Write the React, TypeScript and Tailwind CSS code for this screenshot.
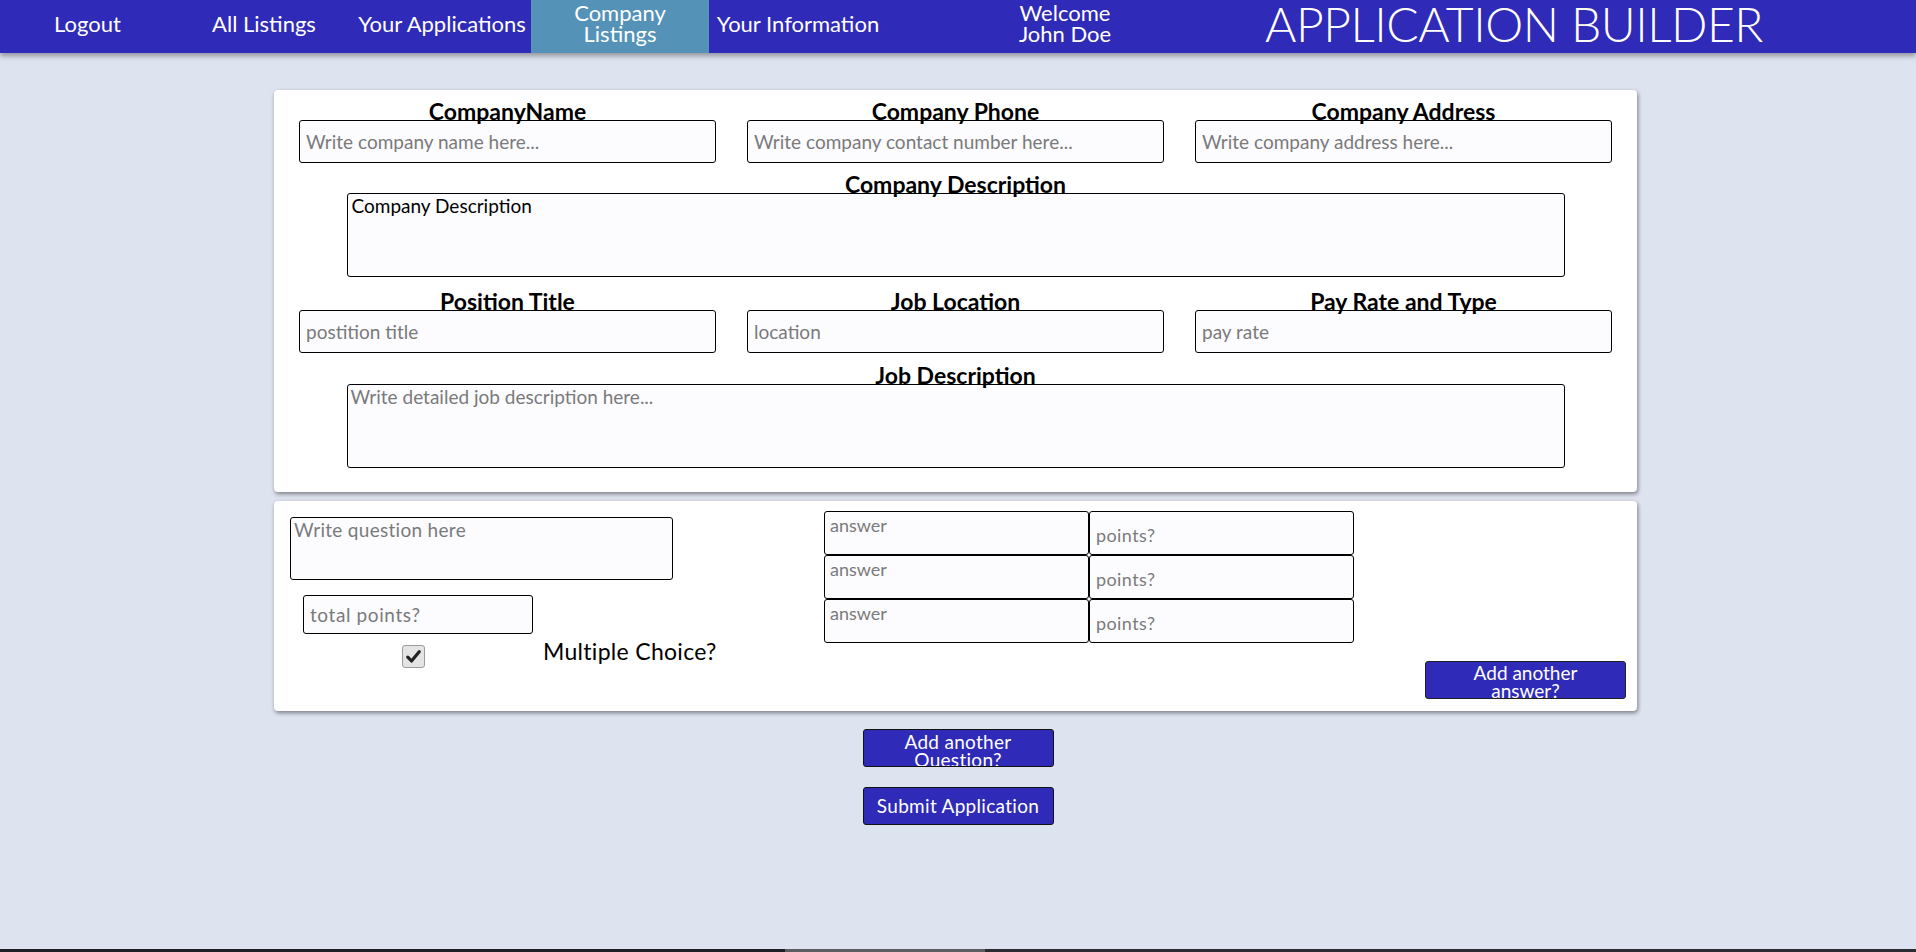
import React from "react";

const font = { fontFamily: "Lato, 'Noto Sans', sans-serif" };

function Label({ children }: { children: React.ReactNode }) {
  return (
    <div className="h-[18px] leading-[18px] text-center text-[23px] font-bold text-black whitespace-nowrap">
      {children}
    </div>
  );
}

function Field({ placeholder }: { placeholder: string }) {
  return (
    <input
      placeholder={placeholder}
      className="block w-full h-[43px] px-[6px] text-[19px] text-black bg-[#fcfcff] border border-black rounded-[3px] placeholder:text-[#7a7a7a] outline-none"
    />
  );
}

export default function App() {
  return (
    <div style={font} className="w-full h-screen bg-[#dee3f0] flex flex-col overflow-hidden">
      {/* Nav */}
      <nav className="h-[53px] shrink-0 bg-[#2f2ab7] flex items-stretch text-white shadow-[0_3px_5px_rgba(0,0,0,0.35)] relative z-10">
        <div className="w-[175px] pb-[7px] flex items-center justify-center text-[22px]">Logout</div>
        <div className="w-[178px] pb-[7px] flex items-center justify-center text-[22px] whitespace-nowrap">All Listings</div>
        <div className="w-[178px] pb-[7px] flex items-center justify-center text-[22px] whitespace-nowrap">Your Applications</div>
        <div className="w-[178px] pb-[7px] flex items-center justify-center text-center text-[22px] leading-[21px] bg-[#5592b8]">
          Company
          <br />
          Listings
        </div>
        <div className="w-[178px] pb-[7px] flex items-center justify-center text-[22px] whitespace-nowrap">Your Information</div>
        <div className="w-[356px] pb-[7px] flex items-center justify-center text-center text-[22px] leading-[21px]">
          Welcome
          <br />
          John Doe
        </div>
        <div className="w-[542px] pb-[5px] flex items-center justify-center text-[48px] leading-[48px] font-light tracking-[-0.5px] whitespace-nowrap">
          APPLICATION BUILDER
        </div>
      </nav>

      {/* Card 1 */}
      <div className="ml-[274px] mt-[37px] w-[1363px] bg-white rounded-[4px] shadow-[1px_2px_4px_rgba(0,0,0,0.45)] px-[25px] pt-[12px] pb-[24px]">
        <div className="grid grid-cols-3 gap-x-[31px]">
          <div>
            <Label>CompanyName</Label>
            <Field placeholder="Write company name here..." />
          </div>
          <div>
            <Label>Company Phone</Label>
            <Field placeholder="Write company contact number here..." />
          </div>
          <div>
            <Label>Company Address</Label>
            <Field placeholder="Write company address here..." />
          </div>
        </div>
        <div className="mt-[12px] w-[1218px] mx-auto">
          <Label>Company Description</Label>
          <textarea
            defaultValue="Company Description"
            className="block w-full h-[84px] px-[4px] py-[1px] text-[19px] leading-[22px] text-black bg-[#fcfcff] border border-black rounded-[3px] resize-none outline-none"
          />
        </div>
        <div className="mt-[15px] grid grid-cols-3 gap-x-[31px]">
          <div>
            <Label>Position Title</Label>
            <Field placeholder="postition title" />
          </div>
          <div>
            <Label>Job Location</Label>
            <Field placeholder="location" />
          </div>
          <div>
            <Label>Pay Rate and Type</Label>
            <Field placeholder="pay rate" />
          </div>
        </div>
        <div className="mt-[13px] w-[1218px] mx-auto">
          <Label>Job Description</Label>
          <textarea
            placeholder="Write detailed job description here..."
            className="block w-full h-[84px] px-[3px] py-[1px] text-[19px] leading-[22px] text-black bg-[#fcfcff] border border-black rounded-[3px] resize-none outline-none placeholder:text-[#7a7a7a]"
          />
        </div>
      </div>

      {/* Card 2 */}
      <div className="ml-[274px] mt-[9px] w-[1363px] h-[210px] bg-white rounded-[4px] shadow-[1px_2px_4px_rgba(0,0,0,0.45)] flex items-start">
        <div className="w-[456px] pl-[16px] pt-[16px] shrink-0">
          <textarea
            placeholder="Write question here"
            className="block w-[383px] h-[63px] px-[3px] py-[1px] text-[19px] leading-[22px] tracking-[0.3px] bg-[#fcfcff] border border-black rounded-[3px] resize-none outline-none placeholder:text-[#7a7a7a]"
          />
          <input
            placeholder="total points?"
            className="block ml-[13px] mt-[15px] w-[230px] h-[39px] px-[6px] text-[19px] tracking-[0.6px] bg-[#fcfcff] border border-black rounded-[3px] outline-none placeholder:text-[#7a7a7a]"
          />
          <div className="mt-[5px] flex items-start">
            <div className="ml-[112px] mt-[6px] w-[23px] h-[23px] rounded-[3px] bg-[#e4e4e4] border border-[#9c9c9c] flex items-center justify-center">
              <svg width="15" height="13" viewBox="0 0 15 13">
                <path d="M1.8 7.2 L5.5 11 L13.2 1.8" fill="none" stroke="#222" strokeWidth="3.2" strokeLinecap="round" strokeLinejoin="round" />
              </svg>
            </div>
            <div className="ml-[118px] text-[23px] leading-[24px] tracking-[0.3px] text-black whitespace-nowrap">Multiple Choice?</div>
          </div>
        </div>

        <div className="mt-[10px] ml-[94px] grid grid-cols-[265px_265px]">
          {[0, 1, 2].map((i) => (
            <React.Fragment key={i}>
              <textarea
                placeholder="answer"
                className="block w-[265px] h-[44px] px-[5px] py-[3px] text-[18px] leading-[20px] bg-[#fcfcff] border border-black rounded-[3px] resize-none outline-none placeholder:text-[#7a7a7a]"
              />
              <input
                placeholder="points?"
                className="block w-[265px] h-[44px] px-[6px] pt-[4px] text-[18px] tracking-[0.4px] bg-[#fcfcff] border border-black rounded-[3px] outline-none placeholder:text-[#7a7a7a]"
              />
            </React.Fragment>
          ))}
        </div>

        <button className="self-end ml-auto mr-[11px] mb-[12px] w-[201px] h-[38px] overflow-hidden bg-[#2f2ab7] border border-[#222] rounded-[3px] text-white text-[19px] leading-[18px] pt-[2px] flex flex-col items-center justify-start">
          <span>Add another</span>
          <span>answer?</span>
        </button>
      </div>

      {/* Bottom buttons */}
      <div className="mt-[18px] flex flex-col items-center gap-[20px]">
        <button className="w-[191px] h-[38px] overflow-hidden bg-[#2f2ab7] border border-[#111] rounded-[3px] text-white text-[19px] leading-[18px] tracking-[0.3px] flex flex-col items-center justify-start pt-[3px]">
          <span>Add another</span>
          <span>Question?</span>
        </button>
        <button className="w-[191px] h-[38px] bg-[#2f2ab7] border border-[#111] rounded-[3px] text-white text-[19px] tracking-[0.3px] flex items-center justify-center whitespace-nowrap">
          Submit Application
        </button>
      </div>

      <div className="mt-auto h-[3px] w-full flex shrink-0">
        <div className="w-[785px] bg-[#1d1f24]" />
        <div className="w-[200px] bg-[#5d5e62]" />
        <div className="flex-1 bg-[#2a2c31]" />
      </div>
    </div>
  );
}
